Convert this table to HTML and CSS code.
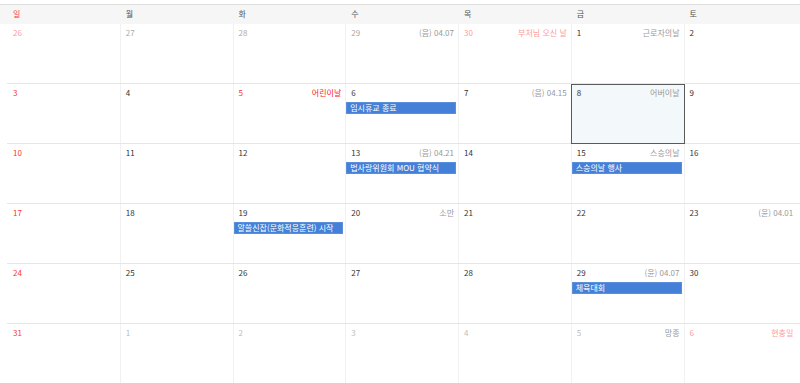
FILE: index.html
```html
<!DOCTYPE html>
<html lang="ko">
<head>
<meta charset="utf-8">
<link rel="stylesheet" href="styles.css">
</head>
<body>
<div class="cal">
  <div class="head">
    <div class="hd sun">일</div><div class="hd">월</div><div class="hd">화</div><div class="hd">수</div><div class="hd">목</div><div class="hd">금</div><div class="hd">토</div>
  </div>

  <div class="week">
    <div class="cell"><div class="top"><span class="num sun-out">26</span></div></div>
    <div class="cell"><div class="top"><span class="num out">27</span></div></div>
    <div class="cell"><div class="top"><span class="num out">28</span></div></div>
    <div class="cell"><div class="top"><span class="num out">29</span><span class="lbl">(음) 04.07</span></div></div>
    <div class="cell"><div class="top"><span class="num hol-out">30</span><span class="lbl hol-out">부처님 오신 날</span></div></div>
    <div class="cell"><div class="top"><span class="num">1</span><span class="lbl">근로자의날</span></div></div>
    <div class="cell last"><div class="top"><span class="num">2</span></div></div>
  </div>

  <div class="week">
    <div class="cell"><div class="top"><span class="num sun">3</span></div></div>
    <div class="cell"><div class="top"><span class="num">4</span></div></div>
    <div class="cell"><div class="top"><span class="num sun">5</span><span class="lbl hol">어린이날</span></div></div>
    <div class="cell"><div class="top"><span class="num">6</span></div><div class="ev">임시휴교 종료</div></div>
    <div class="cell"><div class="top"><span class="num">7</span><span class="lbl">(음) 04.15</span></div></div>
    <div class="cell today"><div class="top"><span class="num">8</span><span class="lbl">어버이날</span></div></div>
    <div class="cell last"><div class="top"><span class="num">9</span></div></div>
  </div>

  <div class="week">
    <div class="cell"><div class="top"><span class="num sun">10</span></div></div>
    <div class="cell"><div class="top"><span class="num">11</span></div></div>
    <div class="cell"><div class="top"><span class="num">12</span></div></div>
    <div class="cell"><div class="top"><span class="num">13</span><span class="lbl">(음) 04.21</span></div><div class="ev">법사랑위원회 MOU 협약식</div></div>
    <div class="cell"><div class="top"><span class="num">14</span></div></div>
    <div class="cell"><div class="top"><span class="num">15</span><span class="lbl">스승의날</span></div><div class="ev">스승의날 행사</div></div>
    <div class="cell last"><div class="top"><span class="num">16</span></div></div>
  </div>

  <div class="week">
    <div class="cell"><div class="top"><span class="num sun">17</span></div></div>
    <div class="cell"><div class="top"><span class="num">18</span></div></div>
    <div class="cell"><div class="top"><span class="num">19</span></div><div class="ev">알쓸신잡(문화적응훈련) 시작</div></div>
    <div class="cell"><div class="top"><span class="num">20</span><span class="lbl">소만</span></div></div>
    <div class="cell"><div class="top"><span class="num">21</span></div></div>
    <div class="cell"><div class="top"><span class="num">22</span></div></div>
    <div class="cell last"><div class="top"><span class="num">23</span><span class="lbl">(윤) 04.01</span></div></div>
  </div>

  <div class="week">
    <div class="cell"><div class="top"><span class="num sun">24</span></div></div>
    <div class="cell"><div class="top"><span class="num">25</span></div></div>
    <div class="cell"><div class="top"><span class="num">26</span></div></div>
    <div class="cell"><div class="top"><span class="num">27</span></div></div>
    <div class="cell"><div class="top"><span class="num">28</span></div></div>
    <div class="cell"><div class="top"><span class="num">29</span><span class="lbl">(윤) 04.07</span></div><div class="ev">체육대회</div></div>
    <div class="cell last"><div class="top"><span class="num">30</span></div></div>
  </div>

  <div class="week">
    <div class="cell"><div class="top"><span class="num sun">31</span></div></div>
    <div class="cell"><div class="top"><span class="num out2">1</span></div></div>
    <div class="cell"><div class="top"><span class="num out2">2</span></div></div>
    <div class="cell"><div class="top"><span class="num out2">3</span></div></div>
    <div class="cell"><div class="top"><span class="num out2">4</span></div></div>
    <div class="cell"><div class="top"><span class="num out2">5</span><span class="lbl">망종</span></div></div>
    <div class="cell last"><div class="top"><span class="num hol-out">6</span><span class="lbl hol-out">현충일</span></div></div>
  </div>
</div>
</body>
</html>
```

FILE: styles.css
```css
html, body {
  margin: 0;
  padding: 0;
  background: #fff;
}

body {
  font-family: "Noto Sans CJK KR", "Liberation Sans", sans-serif;
  font-size: 8px;
  color: #333;
  overflow: hidden;
}

.cal {
  padding-top: 4px;
  width: 800px;
}

.head {
  display: grid;
  grid-template-columns: repeat(7, 112.75px);
  padding-left: 8px;
  height: 19px;
  border-top: 1px solid #dedede;
  background: #f6f6f6;
}

.hd {
  padding-left: 5px;
  line-height: 17px;
  color: #555;
}

.hd.sun {
  color: #ff3333;
}

.week {
  display: grid;
  grid-template-columns: repeat(7, 112.75px);
  margin-left: 7px;
  padding-left: 1px;
  height: 60px;
  box-sizing: border-box;
  border-bottom: 1px solid #e6e6e6;
}

.cell {
  position: relative;
  border-right: 1px solid #f1f1f1;
  min-width: 0;
}

.cell.last {
  border-right: none;
}

.top {
  display: flex;
  justify-content: space-between;
  padding: 3px 4px 0 5px;
  line-height: 11px;
  white-space: nowrap;
}

.num {
  color: #333;
}

.lbl {
  color: #999;
}

.sun {
  color: #ff3333;
}

.hol {
  color: #ff2424;
}

.sun-out,
.hol-out {
  color: #ff9a9a;
}

.out {
  color: #aaa;
}

.out2 {
  color: #bdbdbd;
}

.ev {
  margin: 4px 2px 0 0;
  height: 12px;
  box-sizing: border-box;
  background: #4580d8;
  border: 1px solid #5b8fdc;
  color: #fff;
  line-height: 10px;
  padding-left: 3px;
  white-space: nowrap;
  overflow: hidden;
}

.today {
  background: #f3f8fb;
}

.today::after {
  content: "";
  position: absolute;
  top: 0;
  left: -1px;
  right: -1px;
  bottom: -1px;
  border: 1px solid #5a5a5a;
  pointer-events: none;
}
```
